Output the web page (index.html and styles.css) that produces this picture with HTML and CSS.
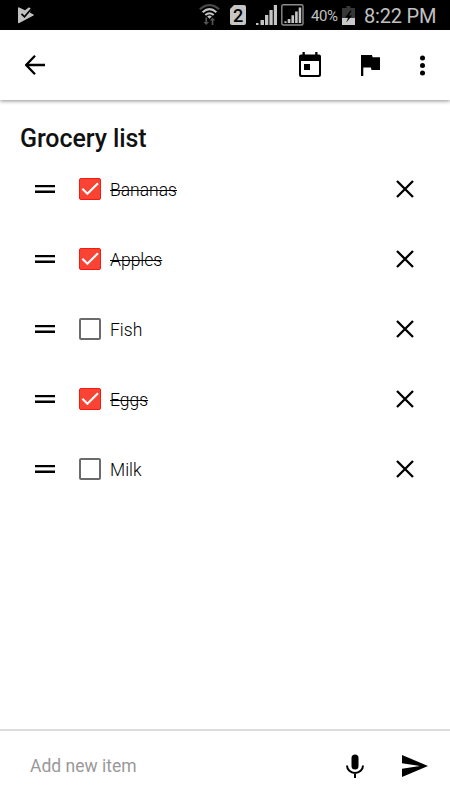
FILE: index.html
```html
<!DOCTYPE html>
<html lang="en">
<head>
<meta charset="utf-8">
<title>Grocery list</title>
<link rel="stylesheet" href="styles.css">
</head>
<body>
<svg class="defs" aria-hidden="true">
  <symbol id="drag" viewBox="0 0 20 9"><path d="M0 0h20v2.3H0zM0 5.5h20v2.4H0z"/></symbol>
  <symbol id="close" viewBox="0 0 18 18"><path d="M1 1l16 16M17 1L1 17" fill="none" stroke="#000" stroke-width="2.3"/></symbol>
  <symbol id="check" viewBox="0 0 22 22"><path d="M3.4 10.7l5 5.1L19 5.2" fill="none" stroke="#fff" stroke-width="2.1"/></symbol>
</svg>
<div class="status">
  <svg class="play" width="16" height="17" viewBox="0 0 16 17"><path d="M0 1.2Q0 0 1.2.4L7 3.2 11 .3 13.3 2.2 11.8 5.6 15.5 7.5Q16.2 8 15.5 8.6L1.3 16Q0 16.5 0 15.3z" fill="#c1c1c1"/><path d="M3.5 6.8l3 3L13 2.3" fill="none" stroke="#000" stroke-width="1.7"/></svg>
  <div class="indicators">
    <svg class="wifi" width="21" height="22" viewBox="0 0 21 22"><g fill="none" stroke-width="2"><path d="M.8 5.2Q10.5-3 20.2 5.2" stroke="#484848"/><path d="M3.6 8.2Q10.5 2 17.4 8.2" stroke="#c5c5c5"/><path d="M6.3 11Q10.5 7.4 14.7 11" stroke="#c5c5c5"/></g><path d="M8.2 12.4q2.3-1.6 4.6 0l-2.3 2.4z" fill="#c5c5c5"/><path d="M6.4 13.500h1.700v4.600H10l-2.800 3-2.700-3h1.900zM12.700 21v-4.500h-1.900l2.700-3 2.700 3h-1.900V21z" fill="#555"/></svg>
    <div class="sim">2</div>
    <svg class="signal" width="21" height="20" viewBox="0 0 21 20"><path d="M0 18h2.500v2H0zM4.500 15H8v5H4.500zM9 10h3.300v10H9zM13.400 5h3.300v15h-3.300zM17.800 0H21v20h-3.200z" fill="#c5c5c5"/></svg>
    <svg class="boxed" width="23" height="22" viewBox="0 0 23 22"><rect x=".8" y=".8" width="21.200" height="20.200" rx="1.500" fill="none" stroke="#8c8c8c" stroke-width="1.400"/><path d="M3.500 17.300h2v1.700h-2zM6.700 15h2.700v4H6.700zM10.400 11.300h2.700V19h-2.700zM14.100 7.500h2.600V19h-2.600zM17.700 3.500h2.500V19h-2.500z" fill="#c5c5c5"/></svg>
    <span class="percent">40%</span>
    <svg class="battery" width="13" height="19" viewBox="0 0 13 19"><path d="M4.500 0h4v2H13v17H0V2h4.500z" fill="#373737"/><path d="M0 12h13v7H0z" fill="#c9c9c9"/><path d="M8.400 4.500L3 11.400h3.200l-2 5 5.900-6.800H6.900l2.800-5.100z" fill="#000"/></svg>
    <span class="time">8:22 PM</span>
  </div>
</div>
<header class="toolbar">
  <svg width="20" height="20" viewBox="0 0 20 20"><path d="M20 10H2M10 .8L1.200 10l8.800 9.200" fill="none" stroke="#000" stroke-width="2.300"/></svg>
  <div class="actions">
    <svg class="calendar" width="22" height="25" viewBox="0 0 22 25"><path d="M3.500 0h2.300v2.600h10.400V0h2.300v2.600H20q2 0 2 2V23q0 2-2 2H2q-2 0-2-2V4.600q0-2 2-2h1.500zM2 9v13.200q0 .8.8.8h16.400q.8 0 .8-.8V9z" fill-rule="evenodd"/><path d="M5 12h6v6H5z"/></svg>
    <svg class="flag" width="19" height="21" viewBox="0 0 19 21"><path d="M0 0h11l.6 2.300H19V15h-8.500l-.6-2.400H2.300V21H0z"/></svg>
    <svg class="more" width="5" height="21" viewBox="0 0 5 21"><circle cx="2.500" cy="3" r="2.500"/><circle cx="2.500" cy="10.500" r="2.500"/><circle cx="2.500" cy="18" r="2.500"/></svg>
  </div>
</header>
<main>
  <h1>Grocery list</h1>
  <ul>
    <li class="done"><svg class="drag"><use href="#drag"/></svg><span class="box"><svg><use href="#check"/></svg></span><span class="name">Bananas</span><svg class="close"><use href="#close"/></svg></li>
    <li class="done"><svg class="drag"><use href="#drag"/></svg><span class="box"><svg><use href="#check"/></svg></span><span class="name">Apples</span><svg class="close"><use href="#close"/></svg></li>
    <li><svg class="drag"><use href="#drag"/></svg><span class="box"></span><span class="name">Fish</span><svg class="close"><use href="#close"/></svg></li>
    <li class="done"><svg class="drag"><use href="#drag"/></svg><span class="box"><svg><use href="#check"/></svg></span><span class="name">Eggs</span><svg class="close"><use href="#close"/></svg></li>
    <li><svg class="drag"><use href="#drag"/></svg><span class="box"></span><span class="name">Milk</span><svg class="close"><use href="#close"/></svg></li>
  </ul>
</main>
<footer>
  <span class="hint">Add new item</span>
  <svg class="mic" width="18" height="24" viewBox="0 0 18 24"><rect x="5.500" y=".5" width="7" height="15" rx="3.500"/><path d="M1 11.500a8 7.500 0 0 0 16 0M9 19v5" fill="none" stroke="#000" stroke-width="2"/></svg>
  <svg class="send" width="26" height="22" viewBox="0 0 26 22"><path d="M0 0l26 11L0 22v-8.300L18 11 0 8.300z"/></svg>
</footer>
</body>
</html>
```
FILE: styles.css
```css
* { box-sizing: border-box; }
body {
  margin: 0;
  width: 450px;
  height: 800px;
  display: flex;
  flex-direction: column;
  overflow: hidden;
  background: #fff;
  color: #000;
  font-family: Roboto, "Liberation Sans", sans-serif;
}
svg { display: block; flex: none; }
.defs { display: none; }
.status {
  flex: none;
  height: 30px;
  padding: 0 13px 0 18px;
  display: flex;
  align-items: center;
  justify-content: space-between;
  background: #000;
  color: #c1c1c1;
}
.indicators { display: flex; align-items: center; white-space: nowrap; }
.sim {
  width: 16px;
  height: 20px;
  margin: 0 10px;
  border-radius: 2px;
  background: #c5c5c5;
  color: #000;
  font-size: 18px;
  font-weight: 500;
  line-height: 21px;
  text-align: center;
  clip-path: polygon(4px 0, 100% 0, 100% 100%, 0 100%, 0 4px);
}
.boxed { margin: 0 7px 0 4px; }
.percent { width: 27px; margin-right: 4px; padding-top: 1px; font-size: 15px; letter-spacing: -0.4px; }
.battery { margin-right: 9px; }
.time { width: 73px; font-size: 20px; letter-spacing: -0.2px; line-height: 30px; padding-top: 1px; }
.toolbar {
  flex: none;
  height: 70px;
  padding: 0 25px;
  display: flex;
  align-items: center;
  justify-content: space-between;
  box-shadow: 0 1px 4px rgba(0, 0, 0, .45);
}
.actions { display: flex; align-items: center; }
.calendar { margin: 0 40px 2px 0; }
.flag { margin: 1px 40px 0 0; }
main { flex: 1; padding-top: 24px; }
h1 {
  margin: 0;
  padding-left: 20px;
  color: #111;
  font-size: 25px;
  font-weight: 500;
  letter-spacing: -0.1px;
  line-height: 30px;
}
ul { margin: 0; padding: 0; list-style: none; }
li {
  height: 70px;
  padding: 0 36px 0 35px;
  display: flex;
  align-items: center;
}
.drag { width: 20px; height: 9px; margin-right: 24px; }
.box {
  flex: none;
  width: 22px;
  height: 22px;
  margin-right: 9px;
  border: 2px solid #6b6b6b;
  border-radius: 2px;
}
.done .box { border: 1px solid #f41b0d; background: #f94334; }
.box svg { width: 22px; height: 22px; margin: -1px; }
.name { flex: 1; font-size: 17.5px; line-height: 24px; padding-top: 1px; font-weight: 300; }
.done .name { text-decoration: line-through; }
.close { width: 18px; height: 18px; }
footer {
  flex: none;
  height: 71px;
  padding: 0 22px 0 30px;
  display: flex;
  align-items: center;
  border-top: 2px solid #dcdcdc;
}
.hint { flex: 1; padding-top: 1px; color: #999; font-size: 17.5px; }
.mic { margin-right: 38px; }
```
